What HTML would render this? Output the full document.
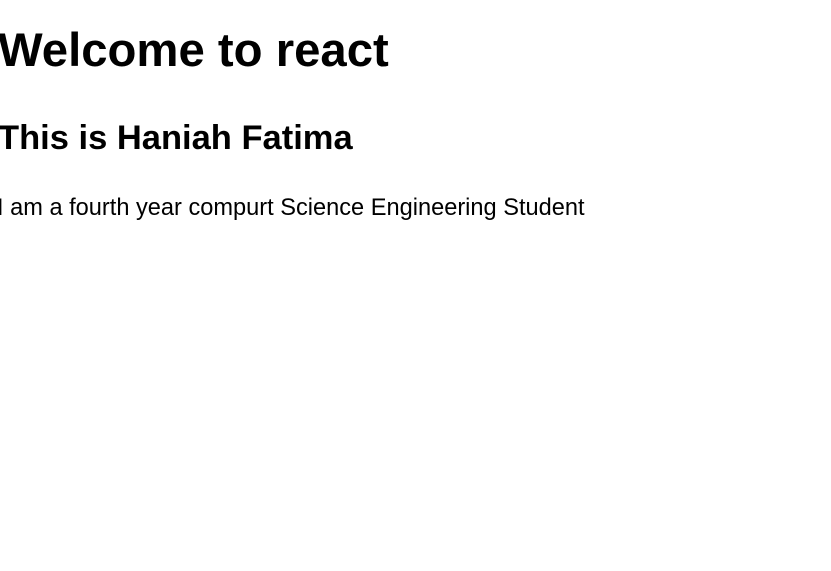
<!DOCTYPE html>
<html><head><meta charset="utf-8"><style>
html,body{margin:0;padding:0;background:#fff;width:831px;height:571px;overflow:hidden;font-family:"Liberation Sans",sans-serif;color:#000}
div{position:absolute;white-space:nowrap;line-height:1}
#a{left:-2px;top:27px;font-size:47.3px;font-weight:bold}
#b{left:-2px;top:121px;font-size:34.5px;font-weight:bold}
#c{left:-3px;top:197px;font-size:23.6px}
</style></head><body>
<div id="a">Welcome to react</div>
<div id="b">This is Haniah Fatima</div>
<div id="c">I am a fourth year compurt Science Engineering Student</div>
</body></html>
